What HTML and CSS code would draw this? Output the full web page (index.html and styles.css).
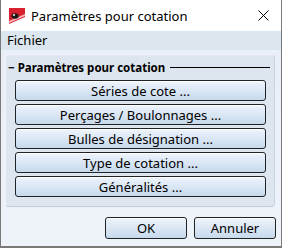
FILE: index.html
```html
<!DOCTYPE html>
<html lang="fr">
<head>
  <meta charset="UTF-8" />
  <title>Paramètres pour cotation</title>
  <link rel="stylesheet" href="styles.css">
</head>
<body>

  <div class="fenetre">
    <!-- BARRE DE TITRE -->
    <div class="barre-titre">
      <svg class="icone-app" width="16" height="16" viewBox="0 0 16 16">
        <rect x="0" y="0" width="16" height="16" fill="#d8202e"/>
        <polygon points="0,16 16,9 16,16" fill="#ffffff"/>
        <polygon points="0,13 16,6 16,8 0,15" fill="#f3b7bc"/>
        <ellipse cx="6" cy="8" rx="3.6" ry="2.8" fill="#1a1a1a"/>
        <circle cx="5" cy="7" r="1" fill="#ffffff"/>
      </svg>
      <span class="titre">Paramètres pour cotation</span>
      <svg class="fermer" width="11" height="11" viewBox="0 0 11 11">
        <path d="M0.5 0.5 L10.5 10.5 M10.5 0.5 L0.5 10.5" stroke="#000" stroke-width="1" fill="none"/>
      </svg>
    </div>

    <!-- MENU -->
    <div class="barre-menu">Fichier</div>

    <!-- CONTENU -->
    <div class="contenu">
      <div class="groupe">
        <div class="groupe-titre">
          <span>− Paramètres pour cotation</span>
          <span class="trait"></span>
        </div>
        <div class="liste-boutons">
          <button class="btn">Séries de cote ...</button>
          <button class="btn">Perçages / Boulonnages ...</button>
          <button class="btn">Bulles de désignation ...</button>
          <button class="btn">Type de cotation ...</button>
          <button class="btn">Généralités ...</button>
        </div>
      </div>

      <div class="pied">
        <button class="btn btn-pied">OK</button>
        <button class="btn btn-pied">Annuler</button>
      </div>
    </div>
  </div>

</body>
</html>
```

FILE: styles.css
```css
body {
  margin: 0;
  padding: 0;
  font-family: 'Noto Sans', 'Open Sans', sans-serif;
  font-size: 13px;
  color: #000;
}

.fenetre {
  width: 282px;
  height: 248px;
  box-sizing: border-box;
  border: 1px solid #7a7a7a;
  border-top: none;
  border-bottom-width: 2px;
  display: flex;
  flex-direction: column;
  background: linear-gradient(#e8eef6, #eef3fa);
}

/* BARRE DE TITRE */
.barre-titre {
  height: 31px;
  background: #ffffff;
  display: flex;
  align-items: center;
  padding-left: 8px;
  padding-right: 12px;
}

.icone-app {
  flex: none;
}

.titre {
  margin-left: 6px;
  flex: 1;
  font-size: 13px;
}

.fermer {
  flex: none;
}

/* MENU */
.barre-menu {
  height: 19px;
  line-height: 19px;
  background: #dce6ee;
  padding-left: 6px;
}

/* CONTENU */
.contenu {
  flex: 1;
  padding: 4px 6px 0 4px;
}

.groupe {
  background: #dde5ee;
  border: 1px solid #f0f4f8;
  border-right-color: #c9d1db;
  border-bottom-color: #c3ccd7;
  border-radius: 4px;
  padding: 4px 8px 9px 9px;
}

.groupe-titre {
  display: flex;
  align-items: center;
  font-weight: bold;
  font-size: 11.5px;
  margin-left: -7px;
  margin-right: -4px;
  height: 16px;
}

.trait {
  flex: 1;
  height: 1px;
  background: #000;
  margin-left: 5px;
  margin-top: 1px;
}

.liste-boutons {
  display: flex;
  flex-direction: column;
  gap: 3px;
  margin-top: 5px;
}

.btn {
  font-family: inherit;
  font-size: 13px;
  color: #000;
  height: 21px;
  padding: 0;
  border: 1px solid #1f2326;
  border-radius: 3px;
  background: linear-gradient(#eef4fb 0%, #dce8f5 45%, #c7d9ec 100%);
  box-shadow: inset 0 1px 0 #ffffff;
}

.pied {
  display: flex;
  justify-content: flex-end;
  gap: 7px;
  margin-top: 10px;
  margin-right: -1px;
}

.btn-pied {
  width: 82px;
  height: 22px;
}
```
